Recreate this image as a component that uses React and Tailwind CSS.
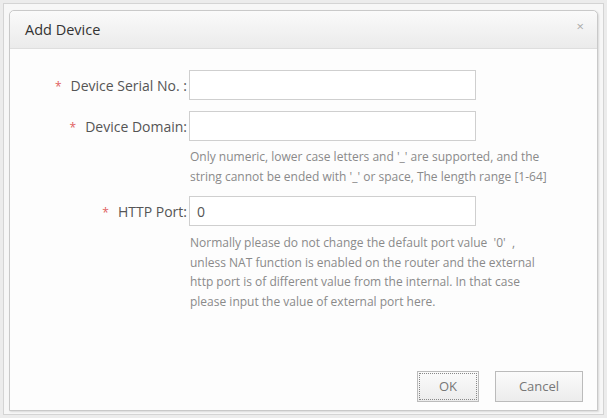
export default function App() {
  const font = { fontFamily: '"Open Sans", "Noto Sans", sans-serif' };
  return (
    <div
      className="w-[607px] h-[418px] bg-[#ececec] p-[3px] text-[#555]"
      style={font}
    >
      <div className="h-full border border-[#d4d4d4] bg-[#f7f7f7] px-[5px] pt-[6px] pb-[3px]">
        <div className="h-full flex flex-col border border-[#c9c9c9] rounded-t-[5px] bg-[#fdfdfd] shadow-[1px_1px_2px_rgba(0,0,0,0.12)]">
          {/* header */}
          <div className="h-[38px] shrink-0 flex items-center justify-between px-[15px] rounded-t-[5px] border-b border-[#dedede] bg-gradient-to-b from-[#fafafa] to-[#ebebeb]">
            <span className="text-[14.5px] text-[#333]">Add Device</span>
            <span className="text-[13px] text-[#aaa] leading-none mr-[-2px] mt-[-6px]">×</span>
          </div>

          {/* body */}
          <div className="flex-1 flex flex-col pt-[21px]">
            <Row label="Device Serial No. :" />
            <Row label="Device Domain:" className="mt-[11px]" />
            <Help className="mt-[6px]">
              Only numeric, lower case letters and '_' are supported, and the
              <br />
              string cannot be ended with '_' or space, The length range [1-64]
            </Help>
            <Row label="HTTP Port:" value="0" className="mt-[10px]" />
            <Help className="mt-[7px]">
              Normally please do not change the default port value&nbsp;&nbsp;'0'&nbsp;&nbsp;,
              <br />
              unless NAT function is enabled on the router and the external
              <br />
              http port is of different value from the internal. In that case
              <br />
              please input the value of external port here.
            </Help>
          </div>

          {/* footer */}
          <div className="flex justify-end gap-[16px] pr-[14px] pb-[8px]">
            <button className="w-[62px] h-[31px] text-[13px] text-[#777] border border-[#bbb] outline-1 outline-dotted outline-[#888] outline-offset-[-3px] bg-gradient-to-b from-[#fbfbfb] to-[#ececec]">
              OK
            </button>
            <button className="w-[88px] h-[31px] text-[13px] text-[#777] border border-[#bbb] bg-gradient-to-b from-[#fbfbfb] to-[#ececec]">
              Cancel
            </button>
          </div>
        </div>
      </div>
    </div>
  );
}

function Row({ label, value = "", className = "" }) {
  return (
    <div className={"flex items-center " + className}>
      <div className="w-[179px] shrink-0 text-right text-[14px] pr-[2px]">
        <span className="text-[#e06060] mr-[9px] text-[12px]">*</span>
        {label}
      </div>
      <div className="w-[287px] h-[30px] border border-[#cfcfcf] bg-white flex items-center px-[7px] text-[14px] text-[#555]">
        {value}
      </div>
    </div>
  );
}

function Help({ children, className = "" }) {
  return (
    <div
      className={
        "ml-[180px] text-[12px] leading-[19.5px] text-[#8a8a8a] " + className
      }
    >
      {children}
    </div>
  );
}
